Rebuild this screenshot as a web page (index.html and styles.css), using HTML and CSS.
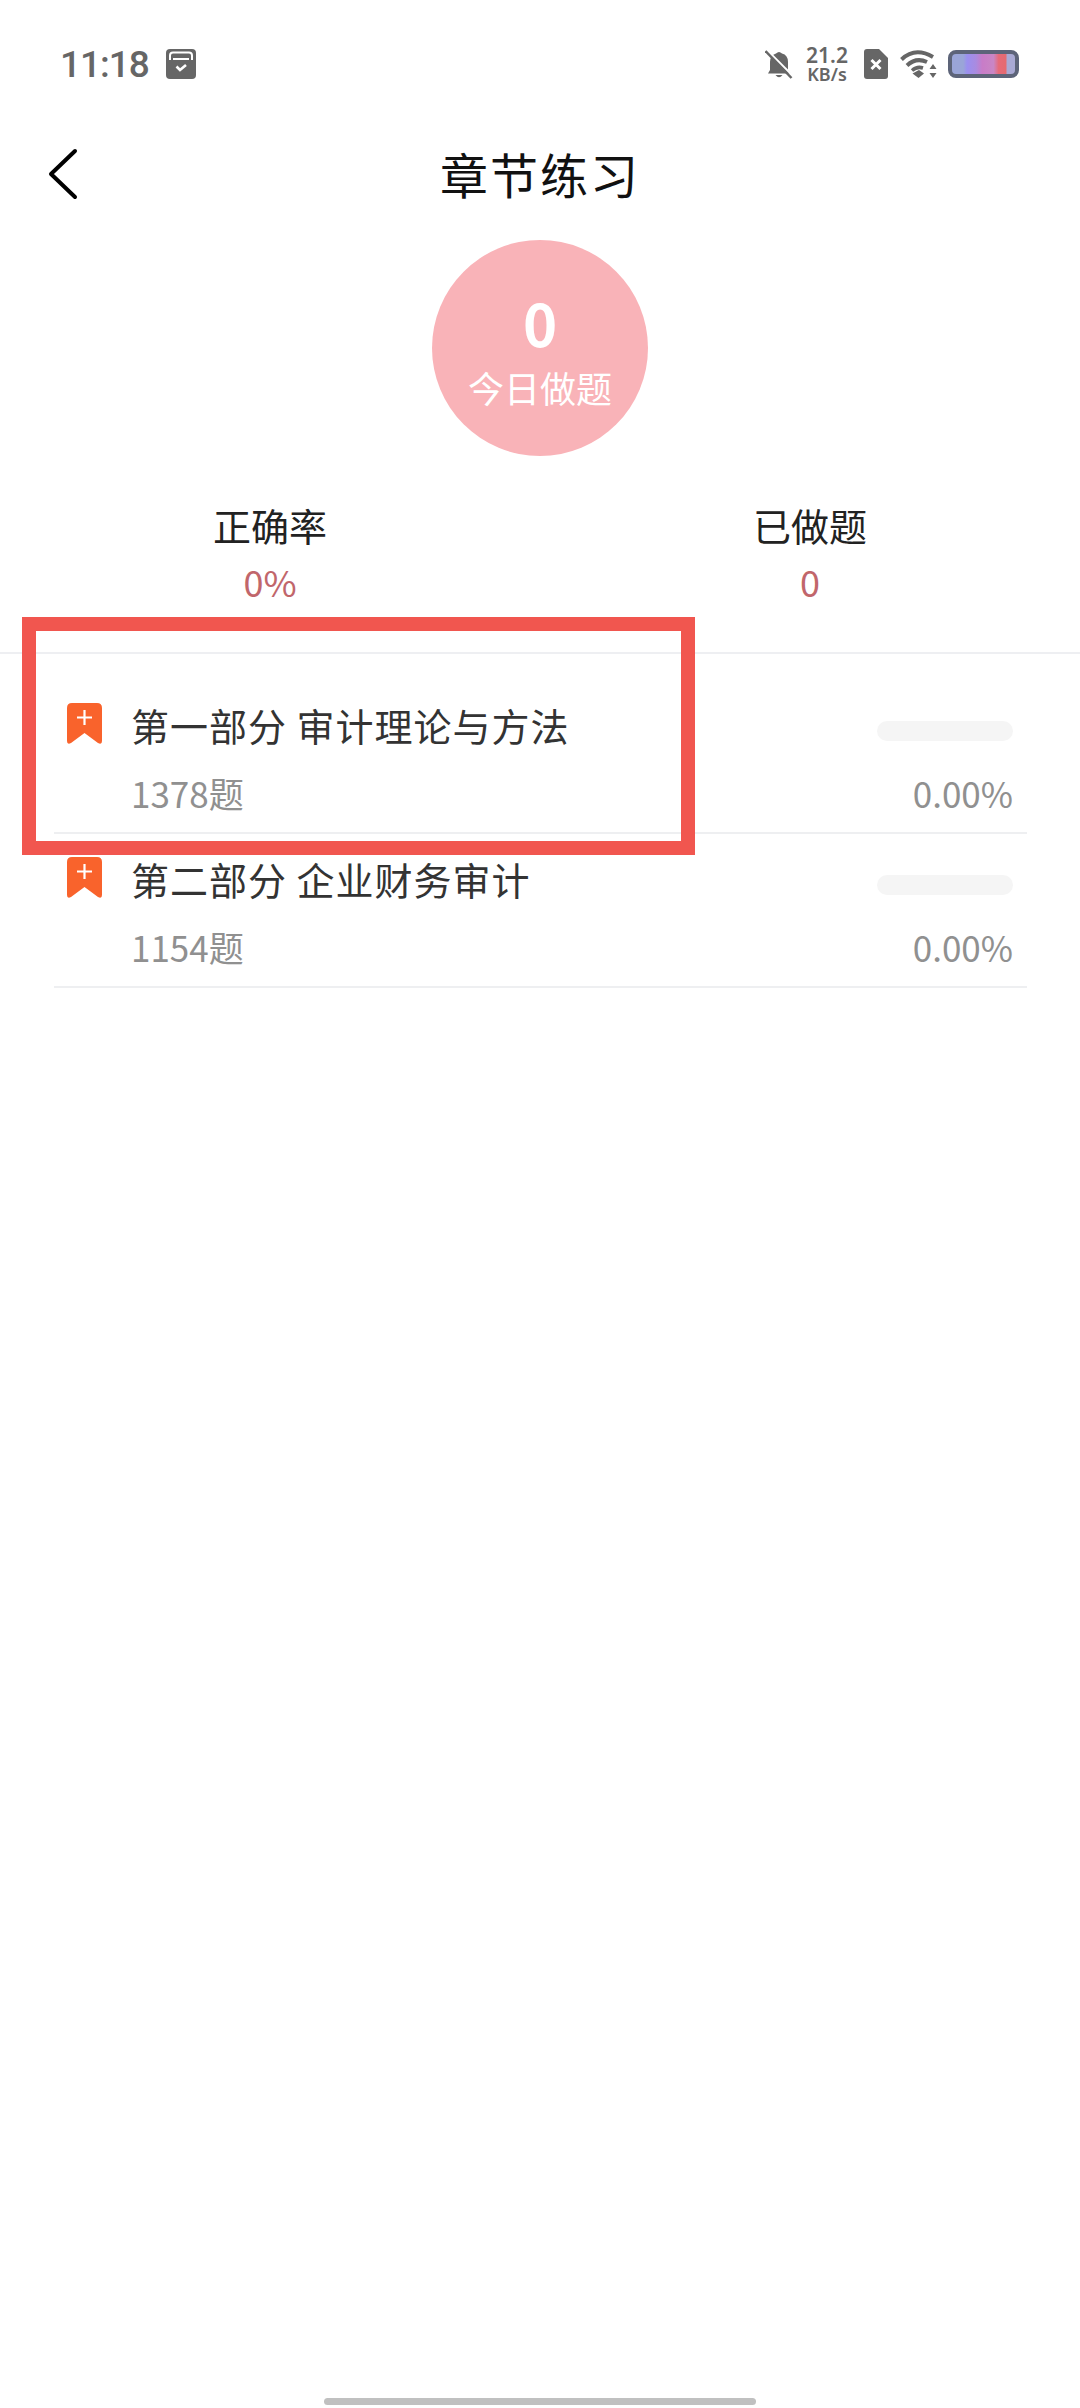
FILE: index.html
```html
<!DOCTYPE html>
<html lang="zh-CN">
<head>
    <meta charset="UTF-8">
    <meta name="viewport" content="width=device-width, initial-scale=1.0">
    <title>章节练习</title>
    <link rel="stylesheet" href="styles.css">
</head>
<body>
    <div class="status-bar">
        <div class="status-left">
            <span class="time">11:18</span>
            <svg class="icon-app" viewBox="0 0 30 30">
                <rect width="30" height="30" rx="4" fill="#666"/>
                <path d="M4 11V6.500Q4 3.500 7 3.500H23Q26 3.500 26 6.500V11" fill="none" stroke="#fff" stroke-width="2"/>
                <path d="M7 10H23" stroke="#fff" stroke-width="2"/>
                <path d="M10.500 17.500L14 21L20 16" fill="none" stroke="#fff" stroke-width="2.600"/>
            </svg>
        </div>
        <div class="status-right">
            <svg class="icon-bell" viewBox="0 0 28 29">
                <path d="M11 3.500Q14 0.500 17 3.500Q23 5 23 12V20L26 23.500H3L5 20V12Q5 5.500 11 3.500Z" fill="#666"/>
                <path d="M10.500 25H17.500Q14 29.500 10.500 25Z" fill="#666"/>
                <path d="M2 0L28 26" stroke="#fff" stroke-width="2"/>
                <path d="M0.500 1L26.500 28" stroke="#666" stroke-width="2.500"/>
            </svg>
            <div class="speed">
                <span class="speed-num">21.2</span>
                <span class="speed-unit">KB/s</span>
            </div>
            <svg class="icon-sim" viewBox="0 0 24 30">
                <path d="M3 0H15L24 9V27Q24 30 21 30H3Q0 30 0 27V3Q0 0 3 0Z" fill="#666"/>
                <path d="M7.500 11L16.500 20M16.500 11L7.500 20" stroke="#fff" stroke-width="3"/>
            </svg>
            <svg class="icon-wifi" viewBox="0 0 37 28">
                <path d="M1.500 9.500Q15 -3.500 33 7" fill="none" stroke="#666" stroke-width="4"/>
                <path d="M7 15.500Q16 7 27 12" fill="none" stroke="#666" stroke-width="4"/>
                <path d="M12 20.500Q17 16 23 18" fill="none" stroke="#666" stroke-width="3.500"/>
                <path d="M12.500 23.500L19 20L24 23.500L18.500 28Z" fill="#666"/>
                <path d="M33 14L36.500 19H29.500ZM33 28L29.500 23H36.500Z" fill="#666"/>
            </svg>
            <div class="battery"></div>
        </div>
    </div>

    <div class="title-bar">
        <svg class="icon-back" viewBox="0 0 30 52">
            <path d="M27 3L3 26L27 49" fill="none" stroke="#000" stroke-width="4" stroke-linecap="round" stroke-linejoin="round"/>
        </svg>
        <h1>章节练习</h1>
    </div>

    <div class="today">
        <span class="today-num">0</span>
        <span class="today-label">今日做题</span>
    </div>

    <div class="stats">
        <div class="stat">
            <span class="stat-label">正确率</span>
            <span class="stat-value">0%</span>
        </div>
        <div class="stat">
            <span class="stat-label">已做题</span>
            <span class="stat-value">0</span>
        </div>
    </div>

    <div class="chapter-list">
        <div class="chapter">
            <svg class="icon-mark" viewBox="0 0 35 41">
                <path d="M5 0H30Q35 0 35 5V38Q35 42 31 40L17.500 30L4 40Q0 42 0 38V5Q0 0 5 0Z" fill="#f9632c"/>
                <path d="M17.500 7V22M10 14.500H25" stroke="#fff" stroke-width="2.200"/>
            </svg>
            <div class="chapter-body">
                <div class="chapter-top">
                    <span class="chapter-name">第一部分 审计理论与方法</span>
                    <div class="progress"></div>
                </div>
                <div class="chapter-bottom">
                    <span>1378题</span>
                    <span>0.00%</span>
                </div>
            </div>
        </div>
        <div class="chapter">
            <svg class="icon-mark" viewBox="0 0 35 41">
                <path d="M5 0H30Q35 0 35 5V38Q35 42 31 40L17.500 30L4 40Q0 42 0 38V5Q0 0 5 0Z" fill="#f9632c"/>
                <path d="M17.500 7V22M10 14.500H25" stroke="#fff" stroke-width="2.200"/>
            </svg>
            <div class="chapter-body">
                <div class="chapter-top">
                    <span class="chapter-name">第二部分 企业财务审计</span>
                    <div class="progress"></div>
                </div>
                <div class="chapter-bottom">
                    <span>1154题</span>
                    <span>0.00%</span>
                </div>
            </div>
        </div>
    </div>

    <div class="highlight-box"></div>
    <div class="home-bar"></div>
</body>
</html>
```

FILE: styles.css
```css
body {
    margin: 0;
    min-height: 2408px;
    display: flex;
    flex-direction: column;
    position: relative;
    background-color: #fff;
    font-family: "Noto Sans CJK SC", "Noto Sans", sans-serif;
    overflow: hidden;
}

/* status bar */
.status-bar {
    height: 64px;
    padding: 0 61px 0 60px;
    margin-top: 32px;
    display: flex;
    justify-content: space-between;
    align-items: center;
}
.status-left {
    display: flex;
    align-items: center;
    gap: 17px;
}
.time {
    font-family: Roboto, sans-serif;
    font-size: 37px;
    font-weight: 500;
    letter-spacing: -1px;
    color: #666;
    line-height: 1;
}
.icon-app {
    width: 30px;
    height: 30px;
}
.status-right {
    display: flex;
    align-items: center;
}
.icon-bell {
    width: 28px;
    height: 29px;
    margin-right: 11px;
}
.speed {
    width: 46px;
    margin-right: 14px;
    display: flex;
    flex-direction: column;
    align-items: center;
    color: #666;
    font-family: "Noto Sans", sans-serif;
    font-weight: 600;
}
.speed-num {
    font-size: 21px;
    line-height: 20px;
}
.speed-unit {
    font-size: 18px;
    line-height: 18px;
}
.icon-sim {
    width: 24px;
    height: 30px;
    margin-right: 12px;
}
.icon-wifi {
    width: 37px;
    height: 28px;
    margin-right: 11px;
}
.battery {
    width: 63px;
    height: 20px;
    border: 4px solid #5d6479;
    border-radius: 8px;
    background: linear-gradient(90deg, #9aa5d8 0%, #9aa5d8 18%, #9b8ff0 24%, #a98be0 38%, #c87cc8 48%, #c986c4 66%, #e66a78 74%, #e56a70 85%, #a9a9d4 88%, #a9a9d4 100%);
}

/* title */
.title-bar {
    height: 94px;
    box-sizing: border-box;
    padding-bottom: 5px;
    margin-top: 32px;
    display: flex;
    justify-content: center;
    align-items: center;
    position: relative;
}
.title-bar h1 {
    margin: 0;
    font-size: 48px;
    font-weight: 400;
    letter-spacing: 2px;
    color: #111;
}
.icon-back {
    position: absolute;
    left: 48px;
    top: 20px;
    width: 30px;
    height: 52px;
}

/* today circle */
.today {
    width: 216px;
    height: 216px;
    margin: 18px auto 0;
    border-radius: 50%;
    background-color: #f9b3b8;
    color: #fff;
    display: flex;
    flex-direction: column;
    align-items: center;
}
.today-num {
    font-size: 58px;
    font-weight: 700;
    line-height: 70px;
    margin-top: 47px;
}
.today-label {
    font-size: 36px;
    line-height: 44px;
    margin-top: 8px;
}

/* stats */
.stats {
    display: flex;
    padding-top: 43px;
    height: 198px;
    box-sizing: border-box;
    border-bottom: 2px solid #eeeff2;
}
.stat {
    width: 541px;
    display: flex;
    flex-direction: column;
    align-items: center;
}
.stat-label {
    font-size: 38px;
    line-height: 52px;
    color: #222;
}
.stat-value {
    font-size: 36px;
    line-height: 52px;
    margin-top: 4px;
    color: #c1666b;
}

/* chapter rows */
.chapter-list {
    padding: 46px 53px 0 54px;
}
.chapter {
    height: 132px;
    padding-left: 13px;
    margin-bottom: 20px;
    display: flex;
    border-bottom: 2px solid #eeeff1;
}
.icon-mark {
    width: 35px;
    height: 41px;
    margin-top: 3px;
    margin-right: 29px;
    flex: none;
}
.chapter-body {
    flex: 1;
    padding-right: 14px;
}
.chapter-top,
.chapter-bottom {
    display: flex;
    justify-content: space-between;
    align-items: center;
}
.chapter-top {
    height: 50px;
}
.chapter-name {
    font-size: 38px;
    line-height: 50px;
    letter-spacing: 1px;
    color: #333;
}
.progress {
    width: 136px;
    height: 20px;
    margin-top: 12px;
    border-radius: 10px;
    background-color: #f5f5f5;
}
.chapter-bottom {
    height: 50px;
    margin-top: 18px;
    font-size: 35px;
    line-height: 50px;
    color: #909090;
}

/* annotation drawn over the first row */
.highlight-box {
    position: absolute;
    left: 22px;
    top: 617px;
    width: 645px;
    height: 210px;
    border: 14px solid #f1564f;
}

.home-bar {
    width: 432px;
    height: 7px;
    margin: auto auto 3px;
    border-radius: 4px;
    background-color: #c0c0c0;
}
```
